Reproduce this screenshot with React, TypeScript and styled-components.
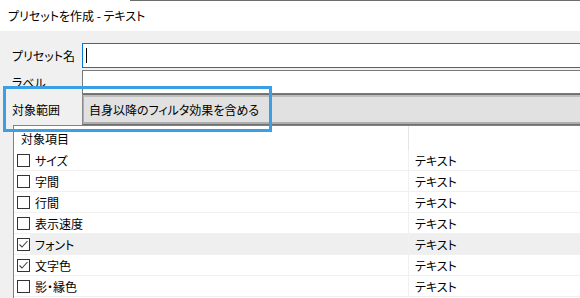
import styled, { createGlobalStyle, css } from "styled-components";

const GlobalStyle = createGlobalStyle`
  html, body {
    margin: 0;
    padding: 0;
    background: #f0f0f0;
  }
  body {
    font-family: "Noto Sans CJK JP", "Noto Sans", sans-serif;
    font-size: 12px;
    color: #000;
    font-feature-settings: "palt";
  }
`;

interface Item {
  name: string;
  kind: string;
  checked?: boolean;
  selected?: boolean;
}

const items: Item[] = [
  { name: "サイズ", kind: "テキスト" },
  { name: "字間", kind: "テキスト" },
  { name: "行間", kind: "テキスト" },
  { name: "表示速度", kind: "テキスト" },
  { name: "フォント", kind: "テキスト", checked: true, selected: true },
  { name: "文字色", kind: "テキスト", checked: true },
  { name: "影・縁色", kind: "テキスト" },
];

const Window = styled.div`
  position: relative;
  width: 580px;
  height: 298px;
  overflow: hidden;
  background: #f0f0f0;
  display: flex;
  flex-direction: column;
`;

const TitleBar = styled.div`
  height: 31px;
  flex: none;
  display: flex;
  align-items: center;
  padding-left: 8px;
  background: linear-gradient(#6d6d6d, #6d6d6d) 130px 0 / 100% 1px no-repeat,
    #fff;
`;

const Form = styled.div`
  padding-top: 12px;
  display: flex;
  flex-direction: column;
`;

const FieldRow = styled.div<{ $height: number; $gap?: number }>`
  display: grid;
  grid-template-columns: 82px 1fr;
  height: ${(p) => p.$height}px;
  margin-top: ${(p) => p.$gap ?? 0}px;
`;

const Label = styled.div`
  padding-left: 12px;
  display: flex;
  align-items: center;
  white-space: nowrap;
`;

const TextInput = styled.div<{ $focused?: boolean }>`
  background: #fff;
  border: 1px solid ${(p) => (p.$focused ? "#0078d7" : "#7a7a7a")};
  border-right: none;
  display: flex;
  align-items: center;
  padding-left: 3px;
`;

const Caret = styled.span`
  width: 1px;
  height: 15px;
  background: #000;
`;

const Combo = styled.div`
  background: #e1e1e1;
  border-top: 1px solid #6f6f6f;
  border-bottom: 1px solid #6f6f6f;
  border-left: 1px solid #8a8a8a;
  box-shadow: inset 0 2px 0 #bdbdbd, inset 0 -2px 0 #adadad,
    inset 1px 0 0 #adadad;
  display: flex;
  align-items: center;
  padding-left: 6px;
  white-space: nowrap;
`;

const ListView = styled.div`
  margin-left: 13px;
  flex: 1;
  background: #fff;
  border-left: 1px solid #828282;
  border-top: 1px solid #828282;
`;

const Grid = styled.div`
  display: grid;
  grid-template-columns: 395px 1fr;
`;

const HeaderCell = styled.div<{ $last?: boolean }>`
  height: 24px;
  display: flex;
  align-items: center;
  padding-left: 7px;
  ${(p) =>
    !p.$last &&
    css`
      border-right: 1px solid #e5e5e5;
    `}
`;

const Row = styled.div<{ $selected?: boolean }>`
  display: contents;
  & > div {
    height: 20px;
    border-bottom: 1px solid #f0f0f0;
    display: flex;
    align-items: center;
  }
  & > div:last-child {
    padding-left: 6px;
    ${(p) =>
      p.$selected &&
      css`
        background: #efefef;
      `}
  }
`;

const NameCell = styled.div<{ $selected?: boolean }>`
  border-right: 1px solid #f0f0f0;
  padding-left: 3px;
`;

const NameText = styled.span<{ $selected?: boolean }>`
  flex: 1;
  height: 100%;
  display: flex;
  align-items: center;
  padding-left: 5px;
  ${(p) =>
    p.$selected &&
    css`
      background: #efefef;
    `}
`;

const Box = styled.span`
  width: 11px;
  height: 11px;
  border: 1px solid #333;
  flex: none;
  display: flex;
  align-items: center;
  justify-content: center;
  background: #fff;
`;

const Highlight = styled.div`
  position: absolute;
  left: 3px;
  top: 86px;
  width: 263px;
  height: 40px;
  border: 3px solid #3b9fe6;
  pointer-events: none;
`;

function Checkbox({ checked }: { checked?: boolean }) {
  return (
    <Box>
      {checked && (
        <svg width="11" height="11" viewBox="0 0 11 11">
          <path d="M1.5 5.5 L4 8 L9.5 2" fill="none" stroke="#444" strokeWidth="1.1" />
        </svg>
      )}
    </Box>
  );
}

export default function App() {
  return (
    <>
      <GlobalStyle />
      <Window>
        <TitleBar>プリセットを作成 - テキスト</TitleBar>
        <Form>
          <FieldRow $height={25}>
            <Label>プリセット名</Label>
            <TextInput $focused>
              <Caret />
            </TextInput>
          </FieldRow>
          <FieldRow $height={24} $gap={2}>
            <Label>ラベル</Label>
            <TextInput />
          </FieldRow>
          <FieldRow $height={31}>
            <Label>対象範囲</Label>
            <Combo>自身以降のフィルタ効果を含める</Combo>
          </FieldRow>
        </Form>
        <ListView>
          <Grid>
            <HeaderCell>対象項目</HeaderCell>
            <HeaderCell $last />
            {items.map((item) => (
              <Row key={item.name} $selected={item.selected}>
                <NameCell>
                  <Checkbox checked={item.checked} />
                  <NameText $selected={item.selected}>{item.name}</NameText>
                </NameCell>
                <div>{item.kind}</div>
              </Row>
            ))}
          </Grid>
        </ListView>
        <Highlight />
      </Window>
    </>
  );
}
